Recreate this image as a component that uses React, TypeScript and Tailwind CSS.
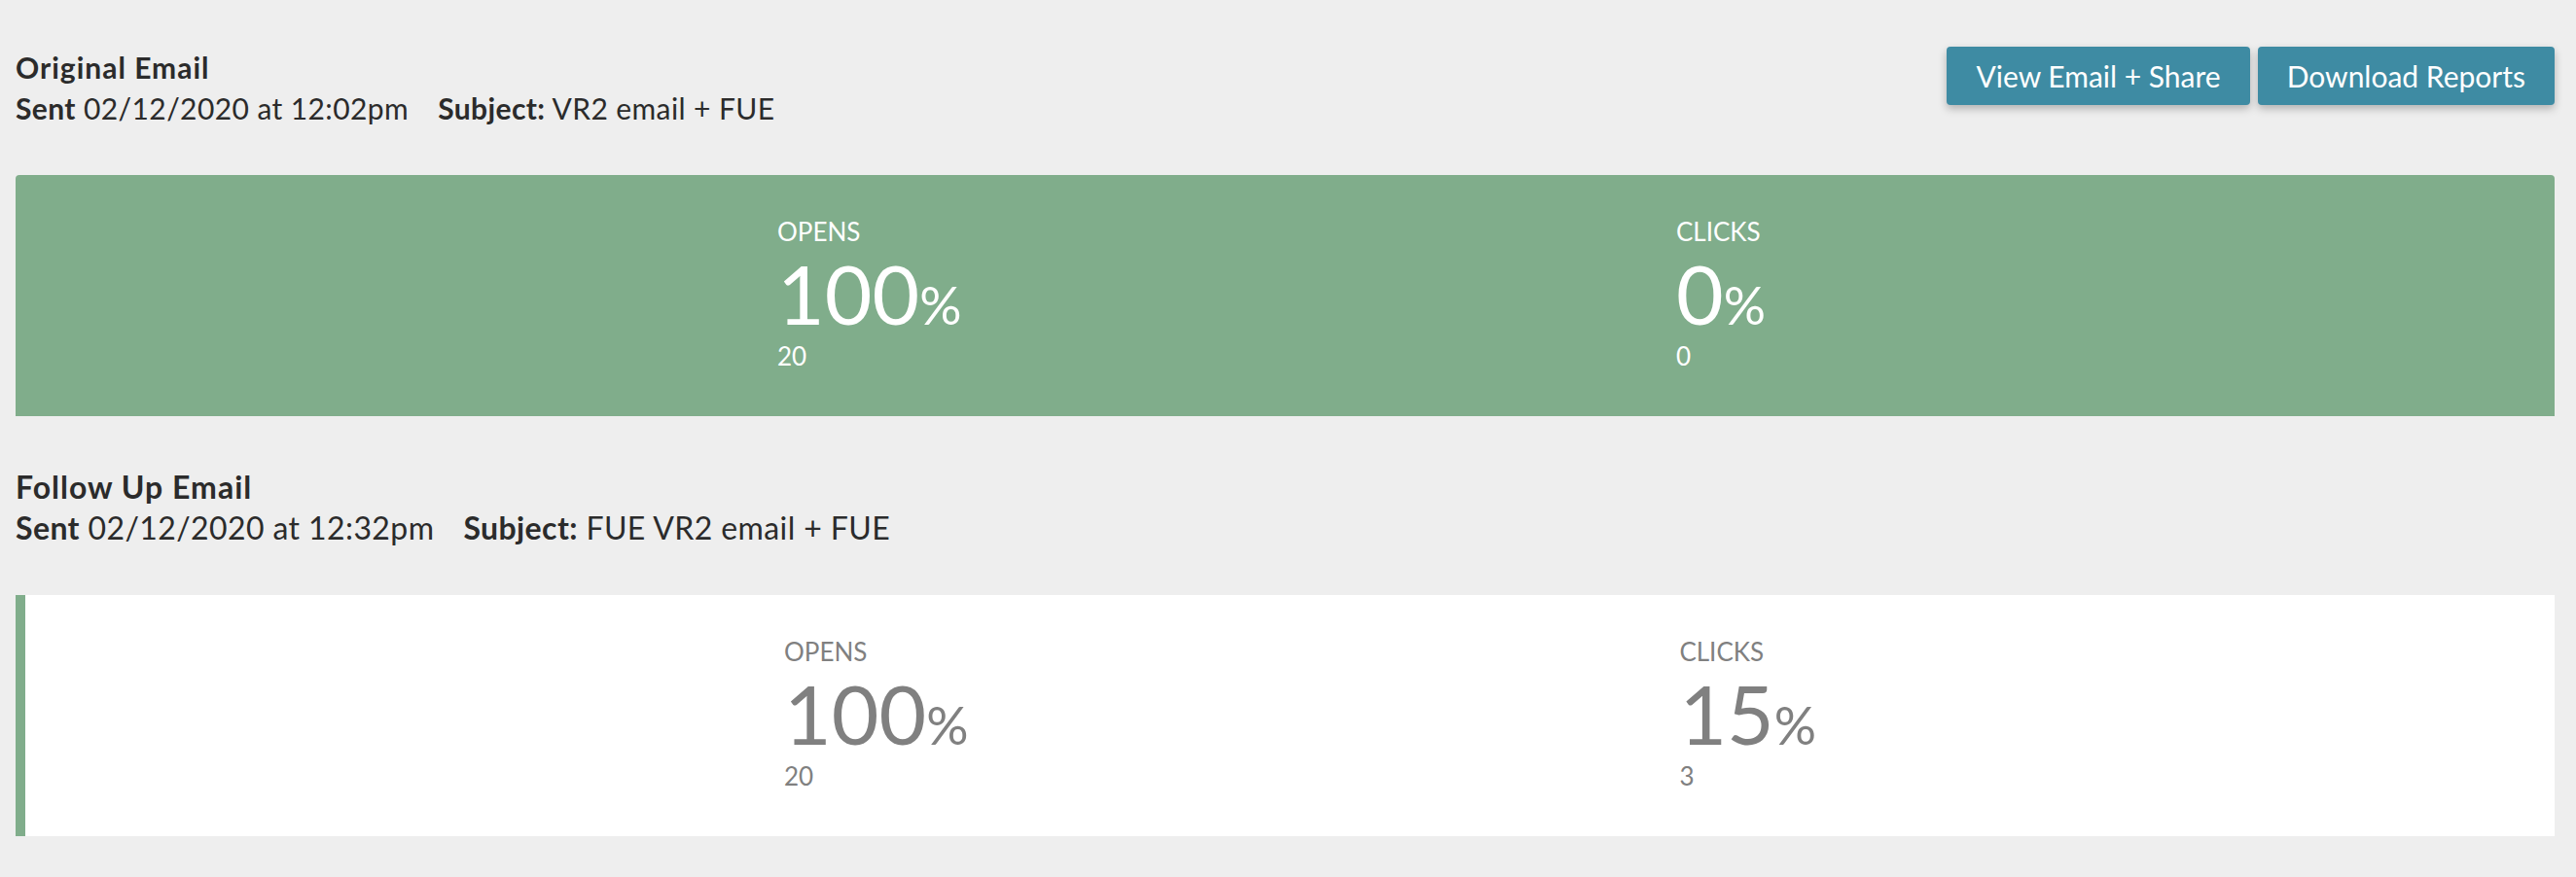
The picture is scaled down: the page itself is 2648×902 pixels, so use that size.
import React from 'react';

type Stat = { label: string; pct: number; count: number };

type EmailReport = {
	title: string;
	sent: string;
	subject: string;
	highlight: boolean;
	textSize: string;
	stats: Stat[];
};

const reports: EmailReport[] = [
	{
		title: 'Original Email',
		sent: '02/12/2020 at 12:02pm',
		subject: 'VR2 email + FUE',
		highlight: true,
		textSize: 'text-[30px]',
		stats: [
			{ label: 'Opens', pct: 100, count: 20 },
			{ label: 'Clicks', pct: 0, count: 0 },
		],
	},
	{
		title: 'Follow Up Email',
		sent: '02/12/2020 at 12:32pm',
		subject: 'FUE VR2 email + FUE',
		highlight: false,
		textSize: 'text-[32px]',
		stats: [
			{ label: 'Opens', pct: 100, count: 20 },
			{ label: 'Clicks', pct: 15, count: 3 },
		],
	},
];

function StatBlock({ stat }: { stat: Stat }) {
	return (
		<div>
			<p className="text-[26px] leading-[28px] uppercase">{stat.label}</p>
			<p className="mt-[8px] text-[84px] leading-[84px]">
				{stat.pct}
				<span className="text-[54px]">%</span>
			</p>
			<p className="mt-[-4px] text-[26px] leading-[28px]">{stat.count}</p>
		</div>
	);
}

function StatsPanel({ report }: { report: EmailReport }) {
	const tone = report.highlight
		? 'bg-[#80ad8b] text-white rounded-t-[4px]'
		: 'bg-white text-[#808080] border-l-[10px] border-[#80ad8b]';

	return (
		<div className={`h-[248px] pt-[44px] flex ${tone}`}>
			<div className="w-[30%] shrink-0" />
			<div className="w-[35.4%] shrink-0">
				<StatBlock stat={report.stats[0]} />
			</div>
			<div className="flex-1">
				<StatBlock stat={report.stats[1]} />
			</div>
		</div>
	);
}

function ActionButton({ children }: { children: React.ReactNode }) {
	return (
		<button className="h-[60px] px-[30px] rounded-[4px] bg-[#3e8ba3] text-white text-[30px] shadow-[0_4px_8px_rgba(0,0,0,0.25)]">
			{children}
		</button>
	);
}

function ReportSection({ report, showActions }: { report: EmailReport; showActions: boolean }) {
	return (
		<section>
			<div className="flex items-start justify-between py-[48px]">
				<div className={`${report.textSize} leading-[42px] text-[#2b2b2b]`}>
					<h2 className="font-bold tracking-[1px]">{report.title}</h2>
					<p className="tracking-[0.4px]">
						<span className="font-bold">Sent</span> {report.sent}
						<span className="inline-block w-[30px]" />
						<span className="font-bold">Subject:</span> {report.subject}
					</p>
				</div>
				{showActions && (
					<div className="flex gap-[8px]">
						<ActionButton>View Email + Share</ActionButton>
						<ActionButton>Download Reports</ActionButton>
					</div>
				)}
			</div>
			<StatsPanel report={report} />
		</section>
	);
}

export default function App() {
	return (
		<div
			className="min-h-screen bg-[#eeeeee] pl-[16px] pr-[22px] flex flex-col gap-[4px]"
			style={{ fontFamily: 'Lato, "Open Sans", sans-serif' }}
		>
			{reports.map((r, i) => (
				<ReportSection key={r.title} report={r} showActions={i === 0} />
			))}
		</div>
	);
}
